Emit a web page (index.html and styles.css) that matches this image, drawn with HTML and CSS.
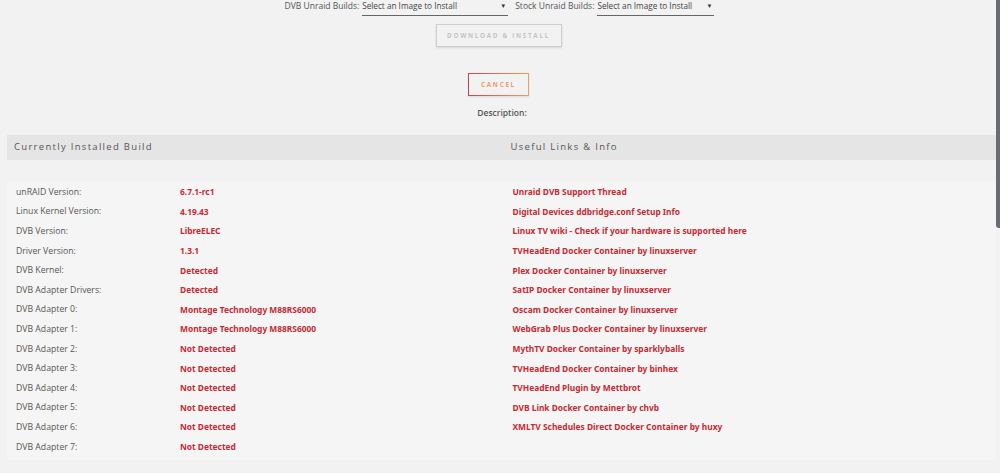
FILE: index.html
```html
<!DOCTYPE html>
<html>
<head>
<meta charset="utf-8">
<title>DVB Driver</title>
<link rel="stylesheet" href="styles.css">
</head>
<body>
<div class="page">
  <div class="builds">
    <label class="build-label">DVB Unraid Builds:</label>
    <div class="select select-dvb"><span>Select an Image to Install</span><span class="caret">&#9660;</span></div>
    <label class="build-label build-label-stock">Stock Unraid Builds:</label>
    <div class="select select-stock"><span>Select an Image to Install</span><span class="caret">&#9660;</span></div>
  </div>

  <div class="actions">
    <button class="btn btn-disabled" disabled>DOWNLOAD &amp; INSTALL</button>
    <button class="btn btn-cancel">CANCEL</button>
    <p class="description">Description:</p>
  </div>

  <div class="info">
    <div class="info-head">
      <div class="head-cell head-left">Currently Installed Build</div>
      <div class="head-cell head-right">Useful Links &amp; Info</div>
    </div>
    <div class="info-body">
      <div class="col col-left">
        <div class="row"><span class="key">unRAID Version:</span><span class="val">6.7.1-rc1</span></div>
        <div class="row"><span class="key">Linux Kernel Version:</span><span class="val">4.19.43</span></div>
        <div class="row"><span class="key">DVB Version:</span><span class="val">LibreELEC</span></div>
        <div class="row"><span class="key">Driver Version:</span><span class="val">1.3.1</span></div>
        <div class="row"><span class="key">DVB Kernel:</span><span class="val">Detected</span></div>
        <div class="row"><span class="key">DVB Adapter Drivers:</span><span class="val">Detected</span></div>
        <div class="row"><span class="key">DVB Adapter 0:</span><span class="val">Montage Technology M88RS6000</span></div>
        <div class="row"><span class="key">DVB Adapter 1:</span><span class="val">Montage Technology M88RS6000</span></div>
        <div class="row"><span class="key">DVB Adapter 2:</span><span class="val">Not Detected</span></div>
        <div class="row"><span class="key">DVB Adapter 3:</span><span class="val">Not Detected</span></div>
        <div class="row"><span class="key">DVB Adapter 4:</span><span class="val">Not Detected</span></div>
        <div class="row"><span class="key">DVB Adapter 5:</span><span class="val">Not Detected</span></div>
        <div class="row"><span class="key">DVB Adapter 6:</span><span class="val">Not Detected</span></div>
        <div class="row"><span class="key">DVB Adapter 7:</span><span class="val">Not Detected</span></div>
      </div>
      <div class="col col-right">
        <a class="link" href="#">Unraid DVB Support Thread</a>
        <a class="link" href="#">Digital Devices ddbridge.conf Setup Info</a>
        <a class="link" href="#">Linux TV wiki - Check if your hardware is supported here</a>
        <a class="link" href="#">TVHeadEnd Docker Container by linuxserver</a>
        <a class="link" href="#">Plex Docker Container by linuxserver</a>
        <a class="link" href="#">SatIP Docker Container by linuxserver</a>
        <a class="link" href="#">Oscam Docker Container by linuxserver</a>
        <a class="link" href="#">WebGrab Plus Docker Container by linuxserver</a>
        <a class="link" href="#">MythTV Docker Container by sparklyballs</a>
        <a class="link" href="#">TVHeadEnd Docker Container by binhex</a>
        <a class="link" href="#">TVHeadEnd Plugin by Mettbrot</a>
        <a class="link" href="#">DVB Link Docker Container by chvb</a>
        <a class="link" href="#">XMLTV Schedules Direct Docker Container by huxy</a>
      </div>
    </div>
  </div>
</div>
<div class="scroll-thumb"></div>
</body>
</html>
```

FILE: styles.css
```css
html, body {
  margin: 0;
  padding: 0;
  background: #f2f2f2;
  height: 100%;
  overflow: hidden;
}

body {
  font-family: "Open Sans", "Noto Sans", sans-serif;
  color: #555;
}

.page {
  padding: 0 4px 0 7px;
}

/* build selectors */
.builds {
  display: flex;
  justify-content: center;
  align-items: flex-start;
  height: 17px;
  padding-right: 4px;
}

.build-label {
  font-size: 8.5px;
  line-height: 12px;
  color: #555;
  margin-right: 3px;
}

.build-label-stock {
  margin-left: 7px;
}

.select {
  display: flex;
  justify-content: space-between;
  font-size: 8.2px;
  line-height: 12px;
  color: #444;
  height: 15px;
  border-bottom: 1px solid #666;
}

.select-dvb { width: 146px; }
.select-stock { width: 117px; }

.caret {
  font-size: 6px;
  color: #333;
  padding-right: 2px;
}

/* action buttons */
.actions {
  display: flex;
  flex-direction: column;
  align-items: center;
  padding-right: 6px;
}

.btn {
  font-family: "Open Sans", sans-serif;
  font-weight: 700;
  font-size: 6.3px;
  letter-spacing: 1.7px;
  background: transparent;
  padding: 0;
  box-sizing: border-box;
  height: 23px;
}

.btn-disabled {
  margin-top: 7px;
  width: 126px;
  color: #c4c4c4;
  border: 1px solid #cfcfcf;
  box-shadow: 0 1px 2px rgba(0, 0, 0, 0.12);
}

.btn-cancel {
  margin-top: 26px;
  width: 61px;
  color: #ee9d6a;
  border: 1px solid transparent;
  border-image: linear-gradient(90deg, #c2464f, #f0a063) 1;
  box-shadow: 0 1px 2px rgba(0, 0, 0, 0.1);
}

.description {
  margin: 11px 0 0 7px;
  font-size: 8.5px;
  font-weight: 600;
  line-height: 12px;
  color: #555;
}

/* info table */
.info {
  margin-top: 16px;
}

.info-head {
  display: grid;
  grid-template-columns: 1fr 1fr;
  background: #e5e5e5;
  height: 25px;
  align-items: center;
}

.head-cell {
  font-size: 9.5px;
  letter-spacing: 1.3px;
  color: #555;
  padding-bottom: 2px;
}

.head-left { padding-left: 7px; }
.head-right { padding-left: 9px; }

.info-body {
  display: grid;
  grid-template-columns: 1fr 1fr;
  margin-top: 22px;
  padding-bottom: 4px;
  background: #f5f5f5;
}

.col {
  display: flex;
  flex-direction: column;
}

.row {
  display: flex;
  height: 19.6px;
  align-items: center;
  padding-left: 9px;
}

.key {
  width: 164px;
  font-size: 8.7px;
  color: #555;
}

.val {
  font-family: "Noto Sans", "Open Sans", sans-serif;
  font-weight: 700;
  font-size: 8.4px;
  color: #c42b34;
}

.col-right {
  padding-left: 11px;
}

.link {
  display: flex;
  align-items: center;
  height: 19.6px;
  font-family: "Noto Sans", "Open Sans", sans-serif;
  font-weight: 700;
  font-size: 8.4px;
  color: #c42b34;
  text-decoration: none;
}

/* overlay scrollbar thumb */
.scroll-thumb {
  position: absolute;
  top: 0;
  right: 0;
  width: 4px;
  height: 228px;
  background: #6b6b74;
  border-bottom-left-radius: 3px;
}
```
